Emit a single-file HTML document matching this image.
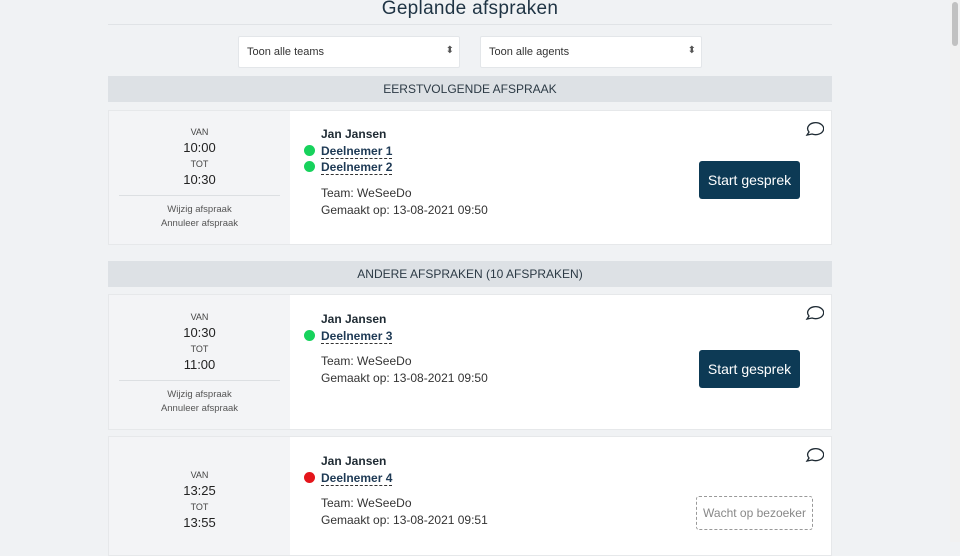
<!DOCTYPE html>
<html><head><meta charset="utf-8"><style>
*{margin:0;padding:0;box-sizing:border-box}
body{width:960px;height:542px;overflow:hidden;background:#f0f2f4;font-family:"Liberation Sans",Arial,sans-serif;color:#1e2a33;position:relative}
.a{position:absolute}
h1{position:absolute;left:0;width:940px;top:-2px;text-align:center;font-weight:normal;font-size:19px;color:#1f3444;letter-spacing:.3px}
.sel{position:absolute;top:36px;height:32px;background:#fff;border:1px solid #e3e6e9;border-radius:2px;font-size:11px;color:#333;padding:9px 8px}
.sel:after{content:"⬍";position:absolute;right:5px;top:8px;font-size:10px;color:#555}
.hdr{position:absolute;left:108px;width:724px;height:26px;background:#dde1e5;font-size:12px;color:#2c3a45;text-align:center;line-height:26px}
.card{position:absolute;left:108px;width:724px;background:#fff;border:1px solid #e6e8ea}
.left{position:absolute;left:0;top:0;bottom:0;width:181px;background:#f3f4f6;text-align:center;color:#333}
.sm{font-size:9px;color:#444;line-height:14px}
.tm{font-size:13px;color:#222;line-height:18px}
.lk{font-size:9.5px;color:#555;line-height:14px}
.name{position:absolute;left:212px;font-size:12px;font-weight:bold;color:#1e2a33}
.dl{position:absolute;left:212px;font-size:12px;font-weight:bold;color:#1e3a55;border-bottom:1px dashed #333;line-height:14px}
.dot{position:absolute;left:195px;width:11px;height:11px;border-radius:50%;background:#17d25c}
.info{position:absolute;left:212px;font-size:12px;color:#333;line-height:17px}
.btn{position:absolute;left:590px;width:101px;height:38px;background:#0d3a55;color:#fff;border-radius:3px;font-size:14px;text-align:center;line-height:38px}
.ic{position:absolute;left:695px}
</style></head><body>
<h1>Geplande afspraken</h1>
<div class="a" style="left:108px;top:24px;width:724px;height:1px;background:#e0e3e6"></div>
<div class="sel" style="left:238px;width:222px">Toon alle teams</div>
<div class="sel" style="left:480px;width:222px">Toon alle agents</div>
<div class="hdr" style="top:76px">EERSTVOLGENDE AFSPRAAK</div>

<div class="card" style="top:110px;height:135px">
 <div class="left"><div style="padding-top:14px" class="sm">VAN</div><div class="tm">10:00</div><div class="sm">TOT</div><div class="tm">10:30</div>
 <div style="margin:6px 10px 0;border-top:1px solid #dcdfe2;padding-top:7px" class="lk">Wijzig afspraak<br>Annuleer afspraak</div></div>
 <div class="name" style="top:16px">Jan Jansen</div>
 <div class="dot" style="top:34px"></div><div class="dl" style="top:33px">Deelnemer 1</div>
 <div class="dot" style="top:50px"></div><div class="dl" style="top:49px">Deelnemer 2</div>
 <div class="info" style="top:74px">Team: WeSeeDo<br>Gemaakt op: 13-08-2021 09:50</div>
 <div class="btn" style="top:50px">Start gesprek</div>
 <svg class="ic" style="top:9px" width="20" height="18" viewBox="0 0 20 18"><path d="M3 15 L5 12 A8 6 0 1 1 8 14 Z" fill="none" stroke="#1e2a33" stroke-width="1.3"/></svg>
</div>

<div class="hdr" style="top:261px">ANDERE AFSPRAKEN (10 AFSPRAKEN)</div>

<div class="card" style="top:294px;height:136px">
 <div class="left"><div style="padding-top:15px" class="sm">VAN</div><div class="tm">10:30</div><div class="sm">TOT</div><div class="tm">11:00</div>
 <div style="margin:6px 10px 0;border-top:1px solid #dcdfe2;padding-top:7px" class="lk">Wijzig afspraak<br>Annuleer afspraak</div></div>
 <div class="name" style="top:17px">Jan Jansen</div>
 <div class="dot" style="top:35px"></div><div class="dl" style="top:34px">Deelnemer 3</div>
 <div class="info" style="top:58px">Team: WeSeeDo<br>Gemaakt op: 13-08-2021 09:50</div>
 <div class="btn" style="top:55px">Start gesprek</div>
 <svg class="ic" style="top:9px" width="20" height="18" viewBox="0 0 20 18"><path d="M3 15 L5 12 A8 6 0 1 1 8 14 Z" fill="none" stroke="#1e2a33" stroke-width="1.3"/></svg>
</div>

<div class="card" style="top:436px;height:120px">
 <div class="left"><div style="padding-top:31px" class="sm">VAN</div><div class="tm">13:25</div><div class="sm">TOT</div><div class="tm">13:55</div></div>
 <div class="name" style="top:17px">Jan Jansen</div>
 <div class="dot" style="top:35px;background:#e4151b"></div><div class="dl" style="top:34px">Deelnemer 4</div>
 <div class="info" style="top:58px">Team: WeSeeDo<br>Gemaakt op: 13-08-2021 09:51</div>
 <div class="a" style="left:587px;top:59px;width:117px;height:34px;border:1px dashed #999;border-radius:3px;font-size:12px;color:#888;text-align:center;line-height:32px">Wacht op bezoeker</div>
 <svg class="ic" style="top:9px" width="20" height="18" viewBox="0 0 20 18"><path d="M3 15 L5 12 A8 6 0 1 1 8 14 Z" fill="none" stroke="#1e2a33" stroke-width="1.3"/></svg>
</div>

<div class="a" style="left:950px;top:0;width:10px;height:542px;background:#f1f1f1"></div>
<div class="a" style="left:952px;top:2px;width:6px;height:44px;background:#c1c1c1;border-radius:3px"></div>
</body></html>
